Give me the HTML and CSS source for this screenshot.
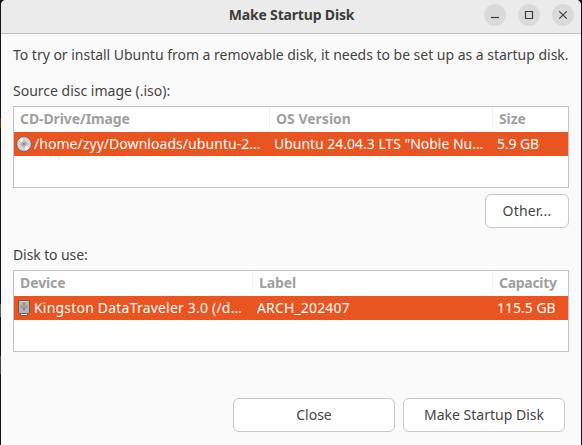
FILE: index.html
```html
<!DOCTYPE html>
<html lang="en">
<head>
<meta charset="utf-8">
<title>Make Startup Disk</title>
<link rel="stylesheet" href="styles.css">
</head>
<body>
<main class="window">
  <header class="titlebar">
    <h1 class="title">Make Startup Disk</h1>
    <div class="controls">
      <button class="control" aria-label="Minimize"><svg viewBox="0 0 22 22"><path d="M7 13.5h8"/></svg></button>
      <button class="control" aria-label="Maximize"><svg viewBox="0 0 22 22"><path d="M7.5 7.5h7v7h-7z"/></svg></button>
      <button class="control" aria-label="Close window"><svg viewBox="0 0 22 22"><path d="M7.3 7.3l7.4 7.4M14.7 7.3l-7.4 7.4"/></svg></button>
    </div>
  </header>
  <div class="content">
    <p class="intro"><span>To try or install Ubuntu from a removable disk, it needs to be set up as a startup disk.</span></p>
    <h2 class="label source-label"><span>Source disc image (.iso):</span></h2>
    <section class="list images">
      <div class="head"><div><span class="h-cd">CD-Drive/Image</span></div><div><span class="h-os">OS Version</span></div><div><span class="h-size">Size</span></div></div>
      <div class="row">
        <div class="named">
          <svg class="icon" viewBox="0 0 16 16"><circle cx="8" cy="8" r="7.4" fill="#d5d4d2" stroke="#77685f"/><path d="M8 8L2.5 4.2A6.7 6.7 0 0 1 6 1.6zM8 8l5.5 3.8A6.7 6.7 0 0 1 10 14.4z" fill="#f0f0ef"/><circle cx="8" cy="8" r="2.2" fill="#e9e8e6" stroke="#8c8a87"/><circle cx="8" cy="8" r=".9" fill="#555"/></svg>
          <span class="r-path">/home/zyy/Downloads/ubuntu-2…</span>
        </div>
        <div><span class="r-os">Ubuntu 24.04.3 LTS "Noble Nu…</span></div>
        <div><span class="r-size">5.9 GB</span></div>
      </div>
    </section>
    <button class="button other"><span>Other...</span></button>
    <h2 class="label disk-label"><span>Disk to use:</span></h2>
    <section class="list disks">
      <div class="head"><div><span class="h-dev">Device</span></div><div><span class="h-label">Label</span></div><div><span class="h-cap">Capacity</span></div></div>
      <div class="row">
        <div class="named">
          <svg class="icon" viewBox="0 0 16 16"><path d="M4.5 12h7v3.5h-7z" fill="#f4f3f1" stroke="#765448"/><rect x="2.5" y=".5" width="11" height="13" rx="1.5" fill="#b5b3b0" stroke="#6a5d57"/><path d="M3.5 1.5h9" stroke="#d0cfcc"/><path d="M8 3v8M5.5 5.5v2L8 9l2.5-1.5v-2" fill="none" stroke="#858380"/><path d="M6.5 4.5L8 2.5l1.5 2z" fill="#858380"/><path d="M5 14.5h6" stroke="#fff"/></svg>
          <span class="r-dev">Kingston DataTraveler 3.0 (/d…</span>
        </div>
        <div><span class="r-label">ARCH_202407</span></div>
        <div><span class="r-cap">115.5 GB</span></div>
      </div>
    </section>
    <footer class="actions">
      <button class="button close"><span>Close</span></button>
      <button class="button make"><span>Make Startup Disk</span></button>
    </footer>
  </div>
</main>
</body>
</html>
```
FILE: styles.css
```css
* { box-sizing: border-box; }
body {
  margin: 0;
  height: 445px;
  overflow: hidden;
  padding: 0 1px;
  background: linear-gradient(#151418 118px, #5b3418 118px 128px, #151418 128px 304px, #565b62 304px 317px, #151418 317px 356px, #44464b 356px 374px, #151418 374px) 0 0 / 1px 100% no-repeat #151418;
  font: 14px/20px "Noto Sans", "Open Sans", sans-serif;
  color: #444;
}
h1, h2, p { margin: 0; font-size: inherit; font-weight: 400; }
span, h1 { white-space: nowrap; }
button { margin: 0; padding: 0; border: 0; font: inherit; color: inherit; }
.window { height: 445px; background: #fafafa; border-radius: 5px 5px 0 0; overflow: hidden; }
.titlebar {
  display: grid;
  grid-template-columns: 1fr auto 1fr;
  height: 34px;
  padding: 4px 7px 0 8px;
  background: #ebebeb;
  border-bottom: 1px solid #bfbfbf;
}
.title { grid-column: 2; font-weight: 700; line-height: 22px; letter-spacing: -.17px; color: #3d3d3d; }
.controls { display: flex; justify-content: flex-end; gap: 12px; }
.control { width: 22px; height: 22px; border-radius: 50%; background: #dadada; }
.control svg { display: block; width: 22px; height: 22px; fill: none; stroke: #3d3d3d; stroke-width: 1.2; }
.content { display: flex; flex-direction: column; padding: 11px 12px 0; }
.intro { height: 36px; letter-spacing: -.02px; }
.label { height: 25px; }
.list { height: 82px; border: 1px solid #c3c3c3; background: #fff; }
.head, .row { display: grid; }
.images .head, .images .row { grid-template-columns: 255px 223px 1fr; }
.disks .head, .disks .row { grid-template-columns: 238px 240px 1fr; }
.head { height: 25px; color: #9f9f9f; font-weight: 700; letter-spacing: -.1px; line-height: 24px; }
.head > div { padding-left: 6px; }
.head > div + div { border-left: 1px solid #f3f3f3; }
.h-os { letter-spacing: 0; }
.h-cap { letter-spacing: -.3px; }
.row { height: 24px; background: #e95420; color: #fff; line-height: 24px; }
.row > div { padding-left: 5px; }
.row > .named { display: flex; align-items: center; gap: 2px; padding-left: 2px; }
.icon { width: 16px; height: 16px; flex: none; }
.r-path { letter-spacing: .05px; }
.r-os { letter-spacing: -.02px; }
.r-size { letter-spacing: -.1px; }
.r-dev { letter-spacing: .2px; }
.r-label { letter-spacing: .15px; }
.button { height: 34px; border: 1px solid #c6c6c6; border-radius: 6px; background: #fff; }
.other { width: 84px; margin-top: 6px; align-self: flex-end; letter-spacing: .2px; }
.disk-label { margin-top: 17px; letter-spacing: -.1px; }
.actions { display: flex; justify-content: flex-end; gap: 8px; margin-top: 46px; padding-right: 4px; }
.actions .button { width: 162px; }
```
